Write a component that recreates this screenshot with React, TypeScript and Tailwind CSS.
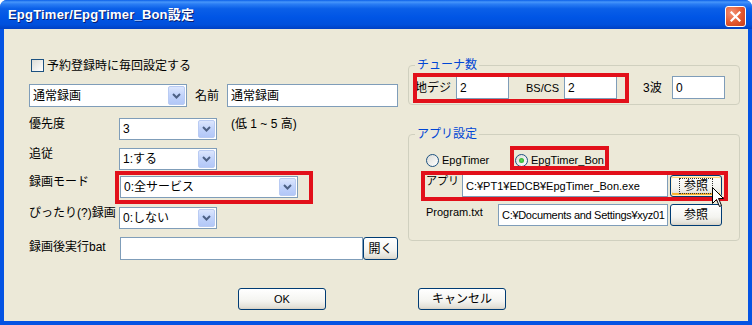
import React from "react";

const Arrow = () => (
  <div className="m-[1px] w-[17px] self-stretch rounded-[2px] border border-[#B9CBF3] bg-[linear-gradient(to_bottom,#DCE6FD,#C1D3FB_50%,#B2C7F7)] flex items-center justify-center">
    <svg width="9" height="6" viewBox="0 0 9 6">
      <path d="M1 1 L4.5 4.5 L8 1" fill="none" stroke="#4D6185" strokeWidth="2" />
    </svg>
  </div>
);

const Combo = ({ className, value }: { className: string; value: string }) => (
  <div className={`flex items-stretch border border-[#7F9DB9] bg-white ${className}`}>
    <div className="flex-1 flex items-center pl-[3px] whitespace-nowrap overflow-hidden">{value}</div>
    <Arrow />
  </div>
);

const Input = ({ className, value }: { className: string; value?: string }) => (
  <div className={`flex items-center border border-[#7F9DB9] bg-white pl-[3px] whitespace-nowrap overflow-hidden ${className}`}>
    {value}
  </div>
);

const Btn = ({ className, children }: { className: string; children: React.ReactNode }) => (
  <div
    className={`flex items-center justify-center rounded-[3px] border border-[#003C74] bg-[linear-gradient(to_bottom,#FFFFFF,#F4F4F0_60%,#E3E1D8_90%,#D6D0C5)] ${className}`}
  >
    {children}
  </div>
);

const Radio = ({ checked }: { checked?: boolean }) => (
  <div className="w-[13px] h-[13px] rounded-full border border-[#1C5180] bg-[linear-gradient(135deg,#DCDCD7,#FFFFFF)] flex items-center justify-center shrink-0">
    {checked && <div className="w-[5px] h-[5px] rounded-full bg-[radial-gradient(circle,#5CD85C,#21A121)]" />}
  </div>
);

const RedBox = ({ className }: { className: string }) => (
  <div className={`absolute border-[4px] border-[#E2101A] pointer-events-none ${className}`} />
);

export default function App() {
  return (
    <div className="w-[752px] h-[325px] bg-white font-['Liberation_Sans','Noto_Sans_CJK_JP',sans-serif] text-[12px] text-black leading-[14px] relative">
      <div className="w-full h-full flex flex-col rounded-t-[7px] overflow-hidden bg-[#0453E3]">
        {/* Title bar */}
        <div className="h-[29px] shrink-0 flex items-center justify-between pl-[8px] pr-[6px] bg-[linear-gradient(to_bottom,#0A5FE8_0%,#4796FA_7%,#2A7DF4_14%,#0A5FE8_30%,#0055E5_60%,#0050DC_85%,#0041C4_100%)]">
          <span className="text-white font-bold text-[13px] tracking-[0.2px] [text-shadow:1px_1px_0_#0A1E6E]">
            EpgTimer/EpgTimer_Bon設定
          </span>
          <div className="w-[21px] h-[21px] mt-[3px] rounded-[3px] border border-white bg-[radial-gradient(circle_at_30%_30%,#F39275,#E3572E_55%,#C63C1A)] flex items-center justify-center">
            <svg width="11" height="11" viewBox="0 0 11 11">
              <path d="M1.5 1.5 L9.5 9.5 M9.5 1.5 L1.5 9.5" stroke="white" strokeWidth="2.2" strokeLinecap="square" />
            </svg>
          </div>
        </div>

        {/* Client */}
        <div className="flex-1 mx-[4px] mb-[4px] bg-[#ECE9D8] flex flex-col">
          <div className="flex">
            {/* Left column */}
            <div className="w-[404px] pl-[25px] flex flex-col">
              <div className="mt-[30px] h-[13px] flex items-center ml-[2px]">
                <div className="w-[13px] h-[13px] border border-[#1C5180] bg-[linear-gradient(135deg,#DCDCD7,#FFFFFF)] shrink-0" />
                <span className="ml-[3px]">予約登録時に毎回設定する</span>
              </div>

              <div className="mt-[12px] h-[23px] flex items-center">
                <Combo className="w-[158px] h-[23px]" value="通常録画" />
                <span className="ml-[8px]">名前</span>
                <Input className="ml-[8px] w-[171px] h-[23px]" value="通常録画" />
              </div>

              <div className="mt-[11px] flex items-start">
                <span className="w-[90px] -mt-[1px]">優先度</span>
                <Combo className="w-[98px] h-[22px]" value="3" />
                <span className="ml-[14px] -mt-[1px]">(低 1 ~ 5 高)</span>
              </div>

              <div className="mt-[8px] flex items-start">
                <span className="w-[90px] -mt-[1px]">追従</span>
                <Combo className="w-[98px] h-[22px]" value="1:する" />
              </div>

              <div className="mt-[6px] flex items-start">
                <span className="w-[91px] -mt-[1px]">録画モード</span>
                <div className="relative">
                  <Combo className="w-[178px] h-[22px]" value="0:全サービス" />
                  <RedBox className="-left-[5px] -right-[15px] -top-[5px] -bottom-[6px]" />
                </div>
              </div>

              <div className="mt-[9px] flex items-start">
                <span className="w-[90px] -mt-[1px]">ぴったり(?)録画</span>
                <Combo className="w-[98px] h-[22px]" value="0:しない" />
              </div>

              <div className="mt-[8px] flex items-start">
                <span className="w-[91px] mt-[3px]">録画後実行bat</span>
                <Input className="w-[243px] h-[23px]" />
                <Btn className="w-[35px] h-[23px]">開く</Btn>
              </div>
            </div>

            {/* Right column */}
            <div className="w-[332px] mt-[29px] flex flex-col">
              <fieldset className="border border-[#D0D0BF] rounded-[4px] p-0 m-0">
                <legend className="ml-[6px] px-[2px] text-[#0046D5] leading-[14px]">チューナ数</legend>
                <div className="pl-[6px] pt-[4px] pb-[5px] flex items-center">
                  <div className="relative flex items-center">
                    <span className="w-[41px]">地デジ</span>
                    <Input className="w-[53px] h-[23px]" value="2" />
                    <span className="ml-[17px] w-[38px] text-[11px]">BS/CS</span>
                    <Input className="w-[53px] h-[23px]" value="2" />
                    <RedBox className="-left-[2px] -right-[12px] -top-[3px] -bottom-[4px]" />
                  </div>
                  <span className="ml-[26px] w-[29px]">3波</span>
                  <Input className="w-[53px] h-[23px]" value="0" />
                </div>
              </fieldset>

              <fieldset className="mt-[22px] border border-[#D0D0BF] rounded-[4px] p-0 m-0">
                <legend className="ml-[6px] px-[2px] text-[#0046D5] leading-[14px]">アプリ設定</legend>
                <div className="pl-[17px] pb-[14px] flex flex-col">
                  <div className="mt-[12px] h-[14px] flex items-center text-[11px]">
                    <div className="w-[89px] flex items-center">
                      <Radio />
                      <span className="ml-[3px]">EpgTimer</span>
                    </div>
                    <div className="relative w-[89px] flex items-center">
                      <Radio checked />
                      <span className="ml-[3px]">EpgTimer_Bon</span>
                      <RedBox className="-left-[5px] -right-[5px] -top-[7px] -bottom-[3px]" />
                    </div>
                  </div>

                  <div className="mt-[7px] relative flex items-start w-[296px]">
                    <span className="w-[36px] text-[11px]">アプリ</span>
                    <Input className="w-[206px] h-[23px] text-[11px]" value="C:¥PT1¥EDCB¥EpgTimer_Bon.exe" />
                    <Btn className="ml-[2px] mt-[1px] w-[52px] h-[22px] shadow-[inset_0_0_0_1px_#FFF0CF,inset_0_-2px_0_1px_#F8B330,inset_0_2px_0_0_#FFD67A]">
                      <span className="px-[4px] outline outline-1 outline-dotted outline-[#333]">参照</span>
                    </Btn>
                    <RedBox className="-left-[5px] -right-[6px] -top-[3px] -bottom-[4px]" />
                  </div>

                  <div className="mt-[7px] flex items-start">
                    <span className="w-[72px] mt-[1px] text-[11px]">Program.txt</span>
                    <Input className="w-[170px] h-[22px] text-[11px] tracking-[-0.3px]" value="C:¥Documents and Settings¥xyz01" />
                    <Btn className="ml-[2px] w-[52px] h-[22px]">参照</Btn>
                  </div>
                </div>
              </fieldset>
            </div>
          </div>

          {/* Buttons */}
          <div className="mt-[28px] flex">
            <Btn className="ml-[234px] w-[88px] h-[22px] text-[11px]">OK</Btn>
            <Btn className="ml-[92px] w-[88px] h-[22px]">キャンセル</Btn>
          </div>
        </div>
      </div>

      {/* Mouse cursor */}
      <svg className="absolute left-[712px] top-[187px]" width="13" height="21" viewBox="0 0 13 21">
        <path d="M0.5 0.5 L0.5 16.5 L4.5 12.5 L7.5 19.5 L9.5 18.5 L6.5 11.5 L11.5 11.5 Z" fill="white" stroke="black" strokeWidth="1" />
      </svg>
    </div>
  );
}
